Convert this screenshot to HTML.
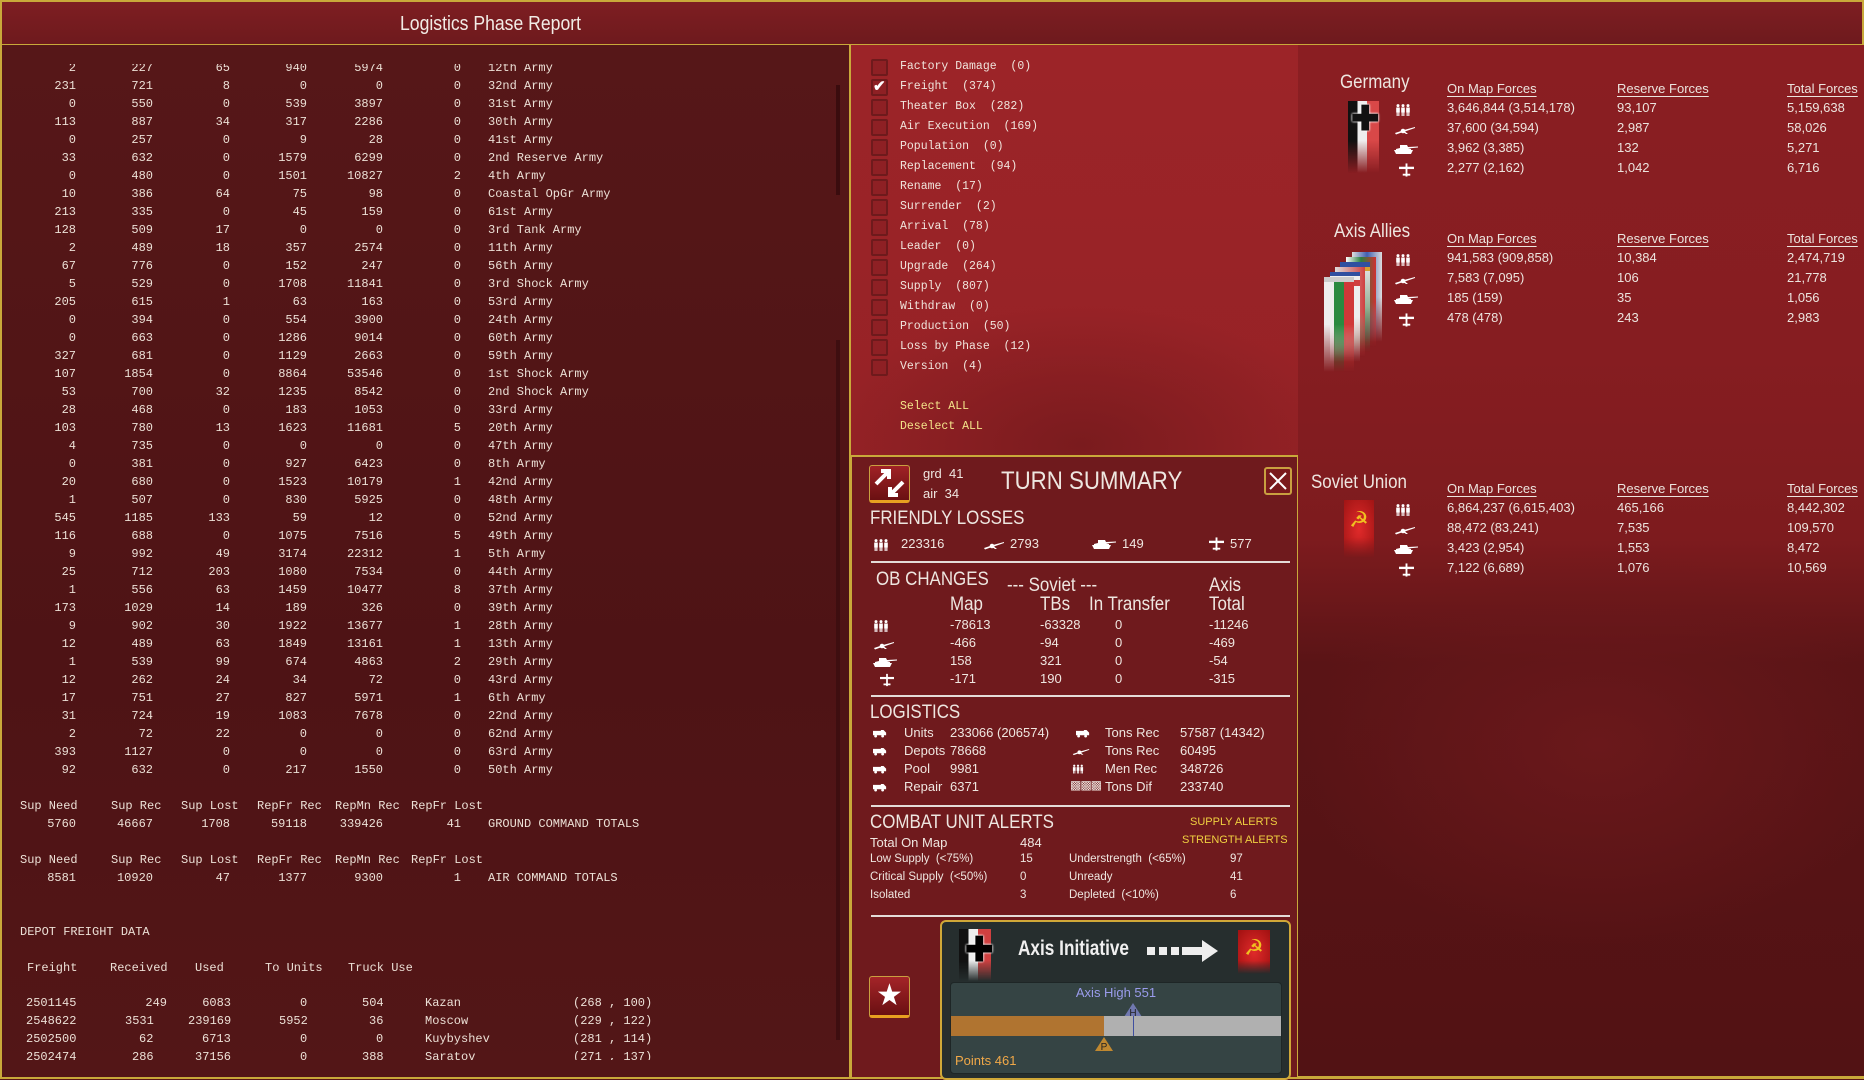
<!DOCTYPE html>
<html><head><meta charset="utf-8">
<style>
*{margin:0;padding:0;box-sizing:border-box}
body{width:1864px;height:1079px;overflow:hidden;background:#5a1517;font-family:"Liberation Sans",sans-serif;color:#e8dcd2;position:relative}
.abs{position:absolute}
#title{left:0;top:0;width:1864px;height:46px;background:linear-gradient(#7e1e22,#6e1a1d);border:2px solid #c9a93a;border-bottom:2px solid #c9a93a}
#title span{position:absolute;left:398px;top:11px;font-size:20px;color:#f2ece6;transform:scaleX(.88);transform-origin:left}
#left{left:0;top:45px;width:851px;height:1034px;background:linear-gradient(180deg,#561718,#4e1315 60%,#531617);border:2px solid #c9a93a;border-top:none}
#scroll{left:836px;top:85px;width:4px;height:110px;background:#3a0c0e}
#scroll2{left:836px;top:340px;width:4px;height:700px;background:#3e0e10}
.mono{font-family:"Liberation Mono",monospace;font-size:12px;color:#ece0d6}
#rows{left:0;top:64px;width:840px;height:716px;overflow:hidden}
#rowsin{margin-top:-5px}
.r{height:18px;line-height:18px;display:flex;white-space:pre}
.r b{font-weight:normal;text-align:right;display:block}
.r b:nth-child(1){width:76px}.r b:nth-child(2){width:77px}.r b:nth-child(3){width:77px}.r b:nth-child(4){width:77px}.r b:nth-child(5){width:76px}.r b:nth-child(6){width:78px}
.r b:nth-child(7){text-align:left;margin-left:27px}
.t{position:absolute;white-space:pre;line-height:18px}
#mid{left:850px;top:45px;width:449px;height:411px;background:radial-gradient(ellipse 260px 140px at 230px 400px,#7a1b1e,transparent),linear-gradient(#9c2428,#962226);border:1px solid #c9a93a;border-top:none}
.cb{position:absolute;left:20px;width:17px;height:17px;border:2px solid #6e1a1c;background:#8e2024;border-radius:2px}
.cl{position:absolute;left:49px;font-family:"Liberation Mono",monospace;font-size:11.5px;color:#f0e4dc;white-space:pre;line-height:20px}
#ts{left:850px;top:455px;width:449px;height:624px;background:#6f1a1d;border:2px solid #c9a93a}
.h{position:absolute;color:#eee6e0;font-size:19px;white-space:nowrap;transform:scaleX(.89);transform-origin:left}
.s{position:absolute;font-size:13px;white-space:nowrap;color:#efe6e0}
.hr{position:absolute;left:19px;width:419px;height:2px;background:#e4dcd8}
#right{left:1298px;top:45px;width:566px;height:1034px;background:radial-gradient(ellipse 300px 200px at 300px 700px,#6a181b,transparent),linear-gradient(180deg,#8a1e22 0,#861d21 30%,#7d1b1e 48%,#5a1416 60%,#521214 100%);border-bottom:3px solid #c9a93a}
.n{position:absolute;font-size:13px;color:#ece4de;white-space:nowrap}
.u{text-decoration:underline;text-underline-offset:3px}
svg.i{position:absolute;fill:#fff}
</style></head><body>
<svg width="0" height="0" style="position:absolute">
<defs>
<symbol id="men" viewBox="0 0 16 12"><circle cx="3" cy="1.6" r="1.5"/><circle cx="8" cy="1.6" r="1.5"/><circle cx="13" cy="1.6" r="1.5"/><rect x="1.2" y="3.5" width="3.6" height="5"/><rect x="6.2" y="3.5" width="3.6" height="5"/><rect x="11.2" y="3.5" width="3.6" height="5"/><rect x="1.6" y="8" width="1.1" height="4"/><rect x="3.3" y="8" width="1.1" height="4"/><rect x="6.6" y="8" width="1.1" height="4"/><rect x="8.3" y="8" width="1.1" height="4"/><rect x="11.6" y="8" width="1.1" height="4"/><rect x="13.3" y="8" width="1.1" height="4"/></symbol>
<symbol id="gun" viewBox="0 0 22 10"><path d="M1 8 L10 5 L21 2 L21 3 L11 6.5 L14 9 L12 9 L9 7 L2 9.5Z"/><circle cx="9" cy="6" r="2.3"/></symbol>
<symbol id="tank" viewBox="0 0 24 11"><path d="M6 1 L13 1 L14 3 L24 2.5 L24 3.5 L14 4.5 L17 5 L17 6 L2 6 L2 5 L6 4Z"/><path d="M0 6 L19 6 L17 10 L2 10Z"/></symbol>
<symbol id="plane" viewBox="0 0 16 14"><rect x="7" y="0" width="2" height="14"/><rect x="0" y="3.5" width="16" height="2.5"/><rect x="4" y="11" width="8" height="2"/></symbol>
<symbol id="truck" viewBox="0 0 16 10"><path d="M0 2 L9 2 L9 1 L12 1 L15 4 L15 7 L0 7Z"/><circle cx="3" cy="8" r="1.6"/><circle cx="11" cy="8" r="1.6"/></symbol>
</defs></svg>

<div id="title" class="abs"><span>Logistics Phase Report</span></div>

<div id="left" class="abs"></div>
<div id="scroll" class="abs"></div><div id="scroll2" class="abs"></div>
<div id="rows" class="abs mono"><div id="rowsin">
<div class="r"><b>2</b><b>227</b><b>65</b><b>940</b><b>5974</b><b>0</b><b>12th Army</b></div>
<div class="r"><b>231</b><b>721</b><b>8</b><b>0</b><b>0</b><b>0</b><b>32nd Army</b></div>
<div class="r"><b>0</b><b>550</b><b>0</b><b>539</b><b>3897</b><b>0</b><b>31st Army</b></div>
<div class="r"><b>113</b><b>887</b><b>34</b><b>317</b><b>2286</b><b>0</b><b>30th Army</b></div>
<div class="r"><b>0</b><b>257</b><b>0</b><b>9</b><b>28</b><b>0</b><b>41st Army</b></div>
<div class="r"><b>33</b><b>632</b><b>0</b><b>1579</b><b>6299</b><b>0</b><b>2nd Reserve Army</b></div>
<div class="r"><b>0</b><b>480</b><b>0</b><b>1501</b><b>10827</b><b>2</b><b>4th Army</b></div>
<div class="r"><b>10</b><b>386</b><b>64</b><b>75</b><b>98</b><b>0</b><b>Coastal OpGr Army</b></div>
<div class="r"><b>213</b><b>335</b><b>0</b><b>45</b><b>159</b><b>0</b><b>61st Army</b></div>
<div class="r"><b>128</b><b>509</b><b>17</b><b>0</b><b>0</b><b>0</b><b>3rd Tank Army</b></div>
<div class="r"><b>2</b><b>489</b><b>18</b><b>357</b><b>2574</b><b>0</b><b>11th Army</b></div>
<div class="r"><b>67</b><b>776</b><b>0</b><b>152</b><b>247</b><b>0</b><b>56th Army</b></div>
<div class="r"><b>5</b><b>529</b><b>0</b><b>1708</b><b>11841</b><b>0</b><b>3rd Shock Army</b></div>
<div class="r"><b>205</b><b>615</b><b>1</b><b>63</b><b>163</b><b>0</b><b>53rd Army</b></div>
<div class="r"><b>0</b><b>394</b><b>0</b><b>554</b><b>3900</b><b>0</b><b>24th Army</b></div>
<div class="r"><b>0</b><b>663</b><b>0</b><b>1286</b><b>9014</b><b>0</b><b>60th Army</b></div>
<div class="r"><b>327</b><b>681</b><b>0</b><b>1129</b><b>2663</b><b>0</b><b>59th Army</b></div>
<div class="r"><b>107</b><b>1854</b><b>0</b><b>8864</b><b>53546</b><b>0</b><b>1st Shock Army</b></div>
<div class="r"><b>53</b><b>700</b><b>32</b><b>1235</b><b>8542</b><b>0</b><b>2nd Shock Army</b></div>
<div class="r"><b>28</b><b>468</b><b>0</b><b>183</b><b>1053</b><b>0</b><b>33rd Army</b></div>
<div class="r"><b>103</b><b>780</b><b>13</b><b>1623</b><b>11681</b><b>5</b><b>20th Army</b></div>
<div class="r"><b>4</b><b>735</b><b>0</b><b>0</b><b>0</b><b>0</b><b>47th Army</b></div>
<div class="r"><b>0</b><b>381</b><b>0</b><b>927</b><b>6423</b><b>0</b><b>8th Army</b></div>
<div class="r"><b>20</b><b>680</b><b>0</b><b>1523</b><b>10179</b><b>1</b><b>42nd Army</b></div>
<div class="r"><b>1</b><b>507</b><b>0</b><b>830</b><b>5925</b><b>0</b><b>48th Army</b></div>
<div class="r"><b>545</b><b>1185</b><b>133</b><b>59</b><b>12</b><b>0</b><b>52nd Army</b></div>
<div class="r"><b>116</b><b>688</b><b>0</b><b>1075</b><b>7516</b><b>5</b><b>49th Army</b></div>
<div class="r"><b>9</b><b>992</b><b>49</b><b>3174</b><b>22312</b><b>1</b><b>5th Army</b></div>
<div class="r"><b>25</b><b>712</b><b>203</b><b>1080</b><b>7534</b><b>0</b><b>44th Army</b></div>
<div class="r"><b>1</b><b>556</b><b>63</b><b>1459</b><b>10477</b><b>8</b><b>37th Army</b></div>
<div class="r"><b>173</b><b>1029</b><b>14</b><b>189</b><b>326</b><b>0</b><b>39th Army</b></div>
<div class="r"><b>9</b><b>902</b><b>30</b><b>1922</b><b>13677</b><b>1</b><b>28th Army</b></div>
<div class="r"><b>12</b><b>489</b><b>63</b><b>1849</b><b>13161</b><b>1</b><b>13th Army</b></div>
<div class="r"><b>1</b><b>539</b><b>99</b><b>674</b><b>4863</b><b>2</b><b>29th Army</b></div>
<div class="r"><b>12</b><b>262</b><b>24</b><b>34</b><b>72</b><b>0</b><b>43rd Army</b></div>
<div class="r"><b>17</b><b>751</b><b>27</b><b>827</b><b>5971</b><b>1</b><b>6th Army</b></div>
<div class="r"><b>31</b><b>724</b><b>19</b><b>1083</b><b>7678</b><b>0</b><b>22nd Army</b></div>
<div class="r"><b>2</b><b>72</b><b>22</b><b>0</b><b>0</b><b>0</b><b>62nd Army</b></div>
<div class="r"><b>393</b><b>1127</b><b>0</b><b>0</b><b>0</b><b>0</b><b>63rd Army</b></div>
<div class="r"><b>92</b><b>632</b><b>0</b><b>217</b><b>1550</b><b>0</b><b>50th Army</b></div>
</div></div>

<div class="mono abs" style="left:0;top:0">
<span class="t" style="left:20px;top:797px">Sup Need</span><span class="t" style="left:111px;top:797px">Sup Rec</span><span class="t" style="left:181px;top:797px">Sup Lost</span><span class="t" style="left:257px;top:797px">RepFr Rec</span><span class="t" style="left:335px;top:797px">RepMn Rec</span><span class="t" style="left:411px;top:797px">RepFr Lost</span>
<div class="r abs" style="top:815px;left:0"><b>5760</b><b>46667</b><b>1708</b><b>59118</b><b>339426</b><b>41</b><b>GROUND COMMAND TOTALS</b></div>
<span class="t" style="left:20px;top:851px">Sup Need</span><span class="t" style="left:111px;top:851px">Sup Rec</span><span class="t" style="left:181px;top:851px">Sup Lost</span><span class="t" style="left:257px;top:851px">RepFr Rec</span><span class="t" style="left:335px;top:851px">RepMn Rec</span><span class="t" style="left:411px;top:851px">RepFr Lost</span>
<div class="r abs" style="top:869px;left:0"><b>8581</b><b>10920</b><b>47</b><b>1377</b><b>9300</b><b>1</b><b>AIR COMMAND TOTALS</b></div>
<span class="t" style="left:20px;top:923px">DEPOT FREIGHT DATA</span>
<span class="t" style="left:27px;top:959px">Freight</span><span class="t" style="left:110px;top:959px">Received</span><span class="t" style="left:195px;top:959px">Used</span><span class="t" style="left:265px;top:959px">To Units</span><span class="t" style="left:348px;top:959px">Truck Use</span>
</div>
<div class="mono abs" style="left:0;top:994px;width:840px;height:66px;overflow:hidden">
<div style="position:relative">
<span class="t" style="left:26px;top:0">2501145</span><span class="t" style="left:131px;top:0">  249</span><span class="t" style="left:195px;top:0"> 6083</span><span class="t" style="left:300px;top:0">0</span><span class="t" style="left:362px;top:0">504</span><span class="t" style="left:425px;top:0">Kazan</span><span class="t" style="left:573px;top:0">(268 , 100)</span>
<span class="t" style="left:26px;top:18px">2548622</span><span class="t" style="left:125px;top:18px">3531</span><span class="t" style="left:188px;top:18px">239169</span><span class="t" style="left:279px;top:18px">5952</span><span class="t" style="left:369px;top:18px">36</span><span class="t" style="left:425px;top:18px">Moscow</span><span class="t" style="left:573px;top:18px">(229 , 122)</span>
<span class="t" style="left:26px;top:36px">2502500</span><span class="t" style="left:139px;top:36px">62</span><span class="t" style="left:202px;top:36px">6713</span><span class="t" style="left:300px;top:36px">0</span><span class="t" style="left:376px;top:36px">0</span><span class="t" style="left:425px;top:36px">Kuybyshev</span><span class="t" style="left:573px;top:36px">(281 , 114)</span>
<span class="t" style="left:26px;top:54px">2502474</span><span class="t" style="left:132px;top:54px">286</span><span class="t" style="left:195px;top:54px">37156</span><span class="t" style="left:300px;top:54px">0</span><span class="t" style="left:362px;top:54px">388</span><span class="t" style="left:425px;top:54px">Saratov</span><span class="t" style="left:573px;top:54px">(271 , 137)</span>
</div></div>

<div id="mid" class="abs">
<div class="cb" style="top:14px"></div><div class="cl" style="top:12px">Factory Damage  (0)</div>
<div class="cb" style="top:34px"><span style="position:absolute;left:0;top:-4px;color:#fff;font-size:15px;font-weight:bold">✔</span></div><div class="cl" style="top:32px">Freight  (374)</div>
<div class="cb" style="top:54px"></div><div class="cl" style="top:52px">Theater Box  (282)</div>
<div class="cb" style="top:74px"></div><div class="cl" style="top:72px">Air Execution  (169)</div>
<div class="cb" style="top:94px"></div><div class="cl" style="top:92px">Population  (0)</div>
<div class="cb" style="top:114px"></div><div class="cl" style="top:112px">Replacement  (94)</div>
<div class="cb" style="top:134px"></div><div class="cl" style="top:132px">Rename  (17)</div>
<div class="cb" style="top:154px"></div><div class="cl" style="top:152px">Surrender  (2)</div>
<div class="cb" style="top:174px"></div><div class="cl" style="top:172px">Arrival  (78)</div>
<div class="cb" style="top:194px"></div><div class="cl" style="top:192px">Leader  (0)</div>
<div class="cb" style="top:214px"></div><div class="cl" style="top:212px">Upgrade  (264)</div>
<div class="cb" style="top:234px"></div><div class="cl" style="top:232px">Supply  (807)</div>
<div class="cb" style="top:254px"></div><div class="cl" style="top:252px">Withdraw  (0)</div>
<div class="cb" style="top:274px"></div><div class="cl" style="top:272px">Production  (50)</div>
<div class="cb" style="top:294px"></div><div class="cl" style="top:292px">Loss by Phase  (12)</div>
<div class="cb" style="top:314px"></div><div class="cl" style="top:312px">Version  (4)</div>
<div class="cl" style="top:352px;color:#f4e48a">Select ALL</div>
<div class="cl" style="top:372px;color:#f4e48a">Deselect ALL</div>
</div>

<div id="ts" class="abs">
<div class="abs" style="left:17px;top:8px;width:41px;height:38px;background:linear-gradient(#a02226,#6a1012);border:1px solid #c9a040;border-bottom:3px solid #e8a020;border-radius:3px">
<svg width="39" height="34" viewBox="0 0 39 34"><path d="M6 18 L18 6 M11 5 L19 5 L19 13" stroke="#fff" stroke-width="4" fill="none"/><path d="M33 16 L21 28 M20 21 L20 29 L28 29" stroke="#fff" stroke-width="4" fill="none"/></svg></div>
<div class="s" style="left:71px;top:9px;font-size:13px">grd&nbsp; 41</div>
<div class="s" style="left:71px;top:29px;font-size:13px">air&nbsp; 34</div>
<div class="h" style="left:149px;top:10px;font-size:25px">TURN SUMMARY</div>
<div class="abs" style="left:412px;top:10px;width:28px;height:28px;border:2px solid #c9a040;border-radius:3px;background:#7a1a1c"><svg width="24" height="24"><path d="M4 4L20 20M20 4L4 20" stroke="#fff" stroke-width="2"/></svg></div>
<div class="h" style="left:18px;top:51px">FRIENDLY LOSSES</div>
<svg class="i" style="left:21px;top:82px" width="16" height="12"><use href="#men"/></svg><div class="s" style="left:49px;top:79px">223316</div>
<svg class="i" style="left:131px;top:83px" width="22" height="10"><use href="#gun"/></svg><div class="s" style="left:158px;top:79px">2793</div>
<svg class="i" style="left:240px;top:82px" width="24" height="11"><use href="#tank"/></svg><div class="s" style="left:270px;top:79px">149</div>
<svg class="i" style="left:357px;top:80px" width="15" height="14"><use href="#plane"/></svg><div class="s" style="left:378px;top:79px">577</div>
<div class="hr" style="top:104px"></div>
<div class="h" style="left:24px;top:112px">OB CHANGES</div>
<div class="h" style="left:155px;top:118px">--- Soviet ---</div>
<div class="h" style="left:357px;top:118px">Axis</div>
<div class="h" style="left:98px;top:137px">Map</div>
<div class="h" style="left:188px;top:137px">TBs</div>
<div class="h" style="left:237px;top:137px">In Transfer</div>
<div class="h" style="left:357px;top:137px">Total</div>
<svg class="i" style="left:21px;top:163px" width="16" height="12"><use href="#men"/></svg>
<svg class="i" style="left:21px;top:183px" width="22" height="10"><use href="#gun"/></svg>
<svg class="i" style="left:21px;top:200px" width="24" height="11"><use href="#tank"/></svg>
<svg class="i" style="left:28px;top:216px" width="14" height="14"><use href="#plane"/></svg>
<div class="s" style="left:98px;top:160px">-78613</div><div class="s" style="left:188px;top:160px">-63328</div><div class="s" style="left:263px;top:160px">0</div><div class="s" style="left:357px;top:160px">-11246</div>
<div class="s" style="left:98px;top:178px">-466</div><div class="s" style="left:188px;top:178px">-94</div><div class="s" style="left:263px;top:178px">0</div><div class="s" style="left:357px;top:178px">-469</div>
<div class="s" style="left:98px;top:196px">158</div><div class="s" style="left:188px;top:196px">321</div><div class="s" style="left:263px;top:196px">0</div><div class="s" style="left:357px;top:196px">-54</div>
<div class="s" style="left:98px;top:214px">-171</div><div class="s" style="left:188px;top:214px">190</div><div class="s" style="left:263px;top:214px">0</div><div class="s" style="left:357px;top:214px">-315</div>
<div class="hr" style="top:238px"></div>
<div class="h" style="left:18px;top:245px">LOGISTICS</div>
<svg class="i" style="left:21px;top:272px" width="14" height="9"><use href="#truck"/></svg><div class="s" style="left:52px;top:268px">Units</div><div class="s" style="left:98px;top:268px">233066 (206574)</div>
<svg class="i" style="left:21px;top:290px" width="14" height="9"><use href="#truck"/></svg><div class="s" style="left:52px;top:286px">Depots</div><div class="s" style="left:98px;top:286px">78668</div>
<svg class="i" style="left:21px;top:308px" width="14" height="9"><use href="#truck"/></svg><div class="s" style="left:52px;top:304px">Pool</div><div class="s" style="left:98px;top:304px">9981</div>
<svg class="i" style="left:21px;top:326px" width="14" height="9"><use href="#truck"/></svg><div class="s" style="left:52px;top:322px">Repair</div><div class="s" style="left:98px;top:322px">6371</div>
<svg class="i" style="left:224px;top:272px" width="14" height="9"><use href="#truck"/></svg><div class="s" style="left:253px;top:268px">Tons Rec</div><div class="s" style="left:328px;top:268px">57587 (14342)</div>
<svg class="i" style="left:220px;top:290px" width="18" height="9"><use href="#gun"/></svg><div class="s" style="left:253px;top:286px">Tons Rec</div><div class="s" style="left:328px;top:286px">60495</div>
<svg class="i" style="left:220px;top:307px" width="12" height="10"><use href="#men"/></svg><div class="s" style="left:253px;top:304px">Men Rec</div><div class="s" style="left:328px;top:304px">348726</div>
<div class="s" style="left:218px;top:321px;font-size:12px;letter-spacing:-1px">▩▩▩</div><div class="s" style="left:253px;top:322px">Tons Dif</div><div class="s" style="left:328px;top:322px">233740</div>
<div class="hr" style="top:348px"></div>
<div class="h" style="left:18px;top:355px">COMBAT UNIT ALERTS</div>
<div class="s" style="left:338px;top:359px;font-size:11px;color:#f0d040">SUPPLY ALERTS</div>
<div class="s" style="left:330px;top:377px;font-size:11px;color:#f0d040">STRENGTH ALERTS</div>
<div class="s" style="left:18px;top:378px">Total On Map</div><div class="s" style="left:168px;top:378px">484</div>
<div class="s" style="left:18px;top:396px;font-size:11.5px">Low Supply&nbsp; (&lt;75%)</div><div class="s" style="left:168px;top:396px;font-size:11.5px">15</div><div class="s" style="left:217px;top:396px;font-size:11.5px">Understrength&nbsp; (&lt;65%)</div><div class="s" style="left:378px;top:396px;font-size:11.5px">97</div>
<div class="s" style="left:18px;top:414px;font-size:11.5px">Critical Supply&nbsp; (&lt;50%)</div><div class="s" style="left:168px;top:414px;font-size:11.5px">0</div><div class="s" style="left:217px;top:414px;font-size:11.5px">Unready</div><div class="s" style="left:378px;top:414px;font-size:11.5px">41</div>
<div class="s" style="left:18px;top:432px;font-size:11.5px">Isolated</div><div class="s" style="left:168px;top:432px;font-size:11.5px">3</div><div class="s" style="left:217px;top:432px;font-size:11.5px">Depleted&nbsp; (&lt;10%)</div><div class="s" style="left:378px;top:432px;font-size:11.5px">6</div>
<div class="hr" style="top:458px"></div>
<div class="abs" style="left:17px;top:519px;width:41px;height:42px;background:linear-gradient(#a42428,#6a1012);border:1px solid #c9a040;border-bottom:3px solid #e8a020;border-radius:3px;color:#fff;font-size:30px;line-height:38px;text-align:center">★</div>
<div class="abs" style="left:88px;top:463px;width:351px;height:160px;background:#262e2e;border:2px solid #d0a838;border-radius:6px">
 <div class="abs" style="left:17px;top:7px;width:32px;height:52px;background:linear-gradient(90deg,#111 0 30%,#eee 30% 60%,#d04040 60%);-webkit-mask:linear-gradient(#000 60%,transparent)"></div>
 <div class="abs" style="left:23px;top:13px;font-size:34px;line-height:30px;color:#000;font-weight:bold;text-shadow:0 0 2px #fff,0 0 2px #fff">✚</div>
 <div class="abs" style="left:76px;top:15px;font-size:21px;font-weight:bold;color:#f0f0f0;transform:scaleX(.82);transform-origin:left">Axis Initiative</div>
 <div class="abs" style="left:205px;top:25px;width:8px;height:8px;background:#eee"></div><div class="abs" style="left:217px;top:25px;width:8px;height:8px;background:#eee"></div><div class="abs" style="left:229px;top:25px;width:8px;height:8px;background:#eee"></div>
 <svg class="abs" style="left:240px;top:16px" width="38" height="26"><path d="M0 9 H20 V2 L36 13 L20 24 V17 H0Z" fill="#eee"/></svg>
 <div class="abs" style="left:296px;top:8px;width:32px;height:44px;background:radial-gradient(#e02a2a,#a01010);-webkit-mask:linear-gradient(#000 70%,transparent);color:#f0c020;font-size:22px;text-align:center;line-height:36px">☭</div>
 <div class="abs" style="left:8px;top:60px;width:332px;height:92px;background:#354444;border-radius:4px;border:1px solid #1e2626">
  <div class="abs" style="left:0;width:330px;text-align:center;top:2px;font-size:13px;color:#9a9cec">Axis High 551</div>
  <svg class="abs" style="left:173px;top:20px" width="18" height="14"><path d="M9 0 L18 14 H0Z" fill="#7078b0"/><text x="9" y="13" font-size="10" text-anchor="middle" fill="#222" font-family="Liberation Sans">H</text></svg>
  <div class="abs" style="left:0;top:33px;width:330px;height:20px;background:#b0b0b0"></div>
  <div class="abs" style="left:0;top:33px;width:153px;height:20px;background:#b07430"></div>
  <div class="abs" style="left:182px;top:33px;width:1px;height:20px;background:#4050a0"></div>
  <svg class="abs" style="left:144px;top:54px" width="18" height="14"><path d="M9 0 L18 14 H0Z" fill="#c08830"/><text x="9" y="13" font-size="10" text-anchor="middle" fill="#222" font-family="Liberation Sans">P</text></svg>
  <div class="abs" style="left:4px;top:70px;font-size:13px;color:#f0a848">Points 461</div>
 </div>
</div>
</div>

<div id="right" class="abs">
 <div class="h" style="left:42px;top:27px;font-size:19px">Germany</div>
 <div class="abs" style="left:50px;top:56px;width:31px;height:72px;background:linear-gradient(90deg,#111 0 30%,#eee 30% 62%,#d84848 62%);-webkit-mask:linear-gradient(#000 55%,transparent)"></div>
 <div class="abs" style="left:53px;top:57px;font-size:34px;line-height:34px;color:#111;font-weight:bold;text-shadow:0 0 2px #fff,0 0 2px #fff">✚</div>
 <div class="h" style="left:36px;top:176px;font-size:19px">Axis Allies</div>
 <div class="abs" style="left:54px;top:207px;width:30px;height:90px;background:linear-gradient(90deg,#ddd,#4060b0 50%,#ddd);-webkit-mask:linear-gradient(#000 50%,transparent)"></div>
 <div class="abs" style="left:48px;top:212px;width:30px;height:90px;background:linear-gradient(90deg,#fff,#2a8040 50%,#d03030);-webkit-mask:linear-gradient(#000 50%,transparent)"></div>
 <div class="abs" style="left:42px;top:217px;width:30px;height:90px;background:linear-gradient(#3050a0 0 5px,#d8a030 5px 9px,#ddd 9px,#3a8040);-webkit-mask:linear-gradient(#000 50%,transparent)"></div>
 <div class="abs" style="left:37px;top:222px;width:30px;height:90px;background:linear-gradient(90deg,#ddd,#d04040);-webkit-mask:linear-gradient(#000 50%,transparent)"></div>
 <div class="abs" style="left:32px;top:227px;width:30px;height:90px;background:linear-gradient(#3050a0 0 4px,#eee 4px 8px,#d04040 8px 14px,#eee 14px);-webkit-mask:linear-gradient(#000 50%,transparent)"></div>
 <div class="abs" style="left:26px;top:232px;width:30px;height:95px;background:linear-gradient(#ccc 0 5px,transparent 5px),linear-gradient(90deg,#eee 0 33%,#2a8a40 33% 66%,#d03838 66%);-webkit-mask:linear-gradient(#000 50%,transparent)"></div>
 <div class="h" style="left:13px;top:427px;font-size:19px">Soviet Union</div>
 <div class="abs" style="left:46px;top:455px;width:30px;height:58px;background:radial-gradient(#e02a2a,#a01414);-webkit-mask:linear-gradient(#000 65%,transparent);color:#f0c020;font-size:22px;text-align:center;line-height:40px">☭</div>
</div>
<div class="abs" style="left:1298px;top:45px">
 <div class="n u" style="left:149px;top:36px">On Map Forces</div><div class="n u" style="left:319px;top:36px">Reserve Forces</div><div class="n u" style="left:489px;top:36px">Total Forces</div>
 <svg class="i" style="left:97px;top:59px" width="16" height="12"><use href="#men"/></svg>
 <svg class="i" style="left:96px;top:80px" width="22" height="10"><use href="#gun"/></svg>
 <svg class="i" style="left:96px;top:99px" width="24" height="11"><use href="#tank"/></svg>
 <svg class="i" style="left:101px;top:118px" width="15" height="14"><use href="#plane"/></svg>
 <div class="n" style="left:149px;top:55px">3,646,844 (3,514,178)</div><div class="n" style="left:319px;top:55px">93,107</div><div class="n" style="left:489px;top:55px">5,159,638</div>
 <div class="n" style="left:149px;top:75px">37,600 (34,594)</div><div class="n" style="left:319px;top:75px">2,987</div><div class="n" style="left:489px;top:75px">58,026</div>
 <div class="n" style="left:149px;top:95px">3,962 (3,385)</div><div class="n" style="left:319px;top:95px">132</div><div class="n" style="left:489px;top:95px">5,271</div>
 <div class="n" style="left:149px;top:115px">2,277 (2,162)</div><div class="n" style="left:319px;top:115px">1,042</div><div class="n" style="left:489px;top:115px">6,716</div>
 <div class="n u" style="left:149px;top:186px">On Map Forces</div><div class="n u" style="left:319px;top:186px">Reserve Forces</div><div class="n u" style="left:489px;top:186px">Total Forces</div>
 <svg class="i" style="left:97px;top:209px" width="16" height="12"><use href="#men"/></svg>
 <svg class="i" style="left:96px;top:230px" width="22" height="10"><use href="#gun"/></svg>
 <svg class="i" style="left:96px;top:249px" width="24" height="11"><use href="#tank"/></svg>
 <svg class="i" style="left:101px;top:268px" width="15" height="14"><use href="#plane"/></svg>
 <div class="n" style="left:149px;top:205px">941,583 (909,858)</div><div class="n" style="left:319px;top:205px">10,384</div><div class="n" style="left:489px;top:205px">2,474,719</div>
 <div class="n" style="left:149px;top:225px">7,583 (7,095)</div><div class="n" style="left:319px;top:225px">106</div><div class="n" style="left:489px;top:225px">21,778</div>
 <div class="n" style="left:149px;top:245px">185 (159)</div><div class="n" style="left:319px;top:245px">35</div><div class="n" style="left:489px;top:245px">1,056</div>
 <div class="n" style="left:149px;top:265px">478 (478)</div><div class="n" style="left:319px;top:265px">243</div><div class="n" style="left:489px;top:265px">2,983</div>
 <div class="n u" style="left:149px;top:436px">On Map Forces</div><div class="n u" style="left:319px;top:436px">Reserve Forces</div><div class="n u" style="left:489px;top:436px">Total Forces</div>
 <svg class="i" style="left:97px;top:459px" width="16" height="12"><use href="#men"/></svg>
 <svg class="i" style="left:96px;top:480px" width="22" height="10"><use href="#gun"/></svg>
 <svg class="i" style="left:96px;top:499px" width="24" height="11"><use href="#tank"/></svg>
 <svg class="i" style="left:101px;top:518px" width="15" height="14"><use href="#plane"/></svg>
 <div class="n" style="left:149px;top:455px">6,864,237 (6,615,403)</div><div class="n" style="left:319px;top:455px">465,166</div><div class="n" style="left:489px;top:455px">8,442,302</div>
 <div class="n" style="left:149px;top:475px">88,472 (83,241)</div><div class="n" style="left:319px;top:475px">7,535</div><div class="n" style="left:489px;top:475px">109,570</div>
 <div class="n" style="left:149px;top:495px">3,423 (2,954)</div><div class="n" style="left:319px;top:495px">1,553</div><div class="n" style="left:489px;top:495px">8,472</div>
 <div class="n" style="left:149px;top:515px">7,122 (6,689)</div><div class="n" style="left:319px;top:515px">1,076</div><div class="n" style="left:489px;top:515px">10,569</div>
</div>
</body></html>
